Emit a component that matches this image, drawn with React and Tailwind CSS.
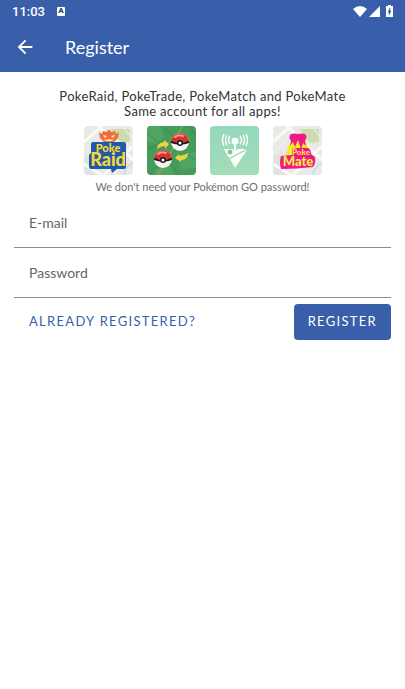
import React from 'react';
import { MdArrowBack } from 'react-icons/md';

const MapBackground = () => (
  <>
    <rect width="49" height="49" fill="#e9e9e5" />
    <path d="M27 3h19v13l-9 1z" fill="#cbddb0" />
    <path d="M0 30l10-4 8 23H0z" fill="#e2e2de" />
    <path d="M0 16L18 0M14 0l35 34M0 38l18 11M49 20L20 49" stroke="#fafaf8" strokeWidth="3" fill="none" />
    <path d="M38 0l11 13M32 49l-8-12M0 27l12-11" stroke="#f6f6f4" strokeWidth="1" fill="none" />
    <path d="M40 49q1-8 9-12" stroke="#c3dbea" strokeWidth="1.5" fill="none" />
  </>
);

const PokeRaidLogo = () => (
  <svg viewBox="0 0 49 49" className="size-[49px] rounded" role="img" aria-label="PokeRaid">
    <MapBackground />
    <path d="M15 6l3 2 1-3 4 1 1-2h2l1 2 4-1 1 3 3-2-1 6-4 4H20l-4-4z" fill="#ee7038" />
    <path d="M19 9l4 1-2 2zM31 9l-4 1 2 2zM20 13l3 1 2-1 3 1 2-1-2 2h-6z" fill="#fff3df" />
    <path d="M9 16h31q2 0 2 2v23q0 2-2 2h-7l-5 4-1-4H7q-2 0-2-2V29l2-2v-9q0-2 2-2z" fill="#2159aa" />
    <text textAnchor="middle" fill="#f9d835" className="font-['Lato',sans-serif] font-black">
      <tspan x="24" y="26" className="text-[11px]">Poke</tspan>
      <tspan x="24" y="40" className="text-[18px]">Raid</tspan>
    </text>
  </svg>
);

const Pokeball = ({ x, y }) => (
  <g transform={`translate(${x} ${y})`}>
    <circle r="9" fill="#f4f4f2" />
    <path d="M-9 0a9 9 0 0 1 18 0z" fill="#d8322f" />
    <path d="M-5-5q3-3 8-1" stroke="#f0968c" strokeWidth="2" fill="none" strokeLinecap="round" />
    <path d="M-9-1Q0 2 9-1v2Q0 4-9 1z" fill="#171717" />
    <circle cy="1" r="3" fill="#171717" />
    <circle cy="1" r="1.5" fill="#fff" />
  </g>
);

const PokeTradeLogo = () => (
  <svg viewBox="0 0 49 49" className="size-[49px] rounded" role="img" aria-label="PokeTrade">
    <rect width="49" height="49" fill="#459c5a" />
    <path d="M0 0h13l4 10-8 8-9-3zM30 29l19-3v15l-14 3zM8 43l15-4 4 10H7z" fill="#51a563" />
    <path d="M0 23l10-4M18 2l9 9M0 7l15 13M38 27l11 7M20 35l12 14M42 0l7 10M3 49l7-8" stroke="#3a8c50" strokeWidth="1" fill="none" />
    <path d="M11 49q7-11 12-21T35 0" stroke="#87a548" strokeWidth="1.5" fill="none" />
    <path d="M10 23q0-6 7-7v-2l5 4-4 5v-3q-4 0-8 3z" fill="#f0d23c" />
    <path d="M41 27q0 7-7 7v2l-6-4 4-4v2q5 0 9-3z" fill="#f0d23c" />
    <Pokeball x={33} y={16} />
    <Pokeball x={16} y={33} />
  </svg>
);

const PokeMatchLogo = () => (
  <svg viewBox="0 0 49 49" className="size-[49px] rounded" role="img" aria-label="PokeMatch">
    <defs>
      <linearGradient id="mint" x1="0" y1="0" x2="0" y2="1">
        <stop offset="0" stopColor="#93d9bb" />
        <stop offset="1" stopColor="#a3dcb8" />
      </linearGradient>
    </defs>
    <rect width="49" height="49" fill="url(#mint)" />
    <circle cx="25" cy="15" r="3.5" fill="#fff" />
    <path d="M25 18v6" stroke="#fff" strokeWidth="2" />
    <path d="M20 10q-3 4 0 8M17 9q-3 5 0 10M14 8q-3 6 0 12M30 10q3 4 0 8M33 9q3 5 0 10M36 8q3 6 0 12" stroke="#fff" strokeWidth="1.4" fill="none" />
    <path d="M14 23h8l3 2 3-2h8L19 32z" fill="#fff" />
    <circle cx="20" cy="26" r="2.5" fill="#7cc9a2" />
    <path d="M37 24L25 42l-5-9z" fill="#fff" />
  </svg>
);

const PokeMateLogo = () => (
  <svg viewBox="0 0 49 49" className="size-[49px] rounded" role="img" aria-label="PokeMate">
    <MapBackground />
    <path d="M19 14h13l3 7 2 8H13l2-8z" fill="#f8ea2c" />
    <path d="M18 15q-3-4 0-7 3-1 7 0 5-1 7 0 3 3 0 7l1 5-3-3-2 6-3-9-3 7-2-5-3 4z" fill="#ee1a88" />
    <path d="M19 23q8-2 16-1 3 1 3 6l4 3q1 6-2 10-16 2-32 2-2-7 0-13l11-1z" fill="#ee1a88" />
    <path d="M13 29l2-7h4l-1 7z" fill="#f8ea2c" />
    <text textAnchor="middle" fill="#f8ed42" className="font-['Lato',sans-serif] font-black">
      <tspan x="28" y="29" className="text-[8px]">Poke</tspan>
      <tspan x="25" y="40" className="text-[13px]">Mate</tspan>
    </text>
  </svg>
);

const StatusBar = () => (
  <div className="flex h-[22px] items-center justify-between px-3">
    <div className="flex items-center gap-3 font-['Roboto',sans-serif] text-[13px] font-medium leading-none">
      <span>11:03</span>
      <span className="flex h-[9px] w-2 items-center justify-center rounded-[1px] bg-white text-[8px] font-black text-[#2c3f6b]">A</span>
    </div>
    <div className="flex items-center gap-0.5" aria-hidden="true">
      <svg viewBox="0 0 14 11" className="h-[11px] w-3.5" fill="currentColor">
        <path d="M0 3q7-6 14 0L7 11z" />
      </svg>
      <svg viewBox="0 0 11 11" className="size-[11px]" fill="currentColor">
        <path d="M11 0v11H0z" />
      </svg>
      <svg viewBox="0 0 7 12" className="ml-1 h-3 w-[7px]">
        <path d="M2 0h3v1h2v11H0V1h2z" fill="#fff" />
        <path d="M4 3L2 7h1v3l2-4H4z" fill="#395faa" stroke="#395faa" strokeWidth="0.5" />
      </svg>
    </div>
  </div>
);

// Label rests over the input until it is focused or filled
const Field = ({ id, label, type }) => (
  <div className="relative border-b border-[#8b8b8b]">
    <input
      id={id}
      type={type}
      placeholder=" "
      className="peer block h-[49px] w-full px-[15px] pt-2 text-sm text-[#222] outline-none"
    />
    <label
      htmlFor={id}
      className="pointer-events-none absolute left-[15px] top-0 text-[10px] leading-[49px] text-[#666] peer-not-placeholder-shown:leading-4 peer-placeholder-shown:text-sm peer-placeholder-shown:leading-[49px] peer-focus:text-[10px] peer-focus:leading-4"
    >
      {label}
    </label>
  </div>
);

export default function App() {
  return (
    <div className="min-h-screen bg-white font-['Lato',sans-serif] text-[#333]">
      <header className="bg-[#395faa] text-white">
        <StatusBar />
        <div className="flex h-[50px] items-center gap-[29px] px-3.5">
          <button type="button" aria-label="Back">
            <MdArrowBack className="size-[22px]" />
          </button>
          <h1 className="text-lg">Register</h1>
        </div>
      </header>

      <main className="px-3.5 pt-[17px]">
        {/* Intro */}
        <section className="flex flex-col items-center text-center">
          <p className="text-[13px] leading-[15px] tracking-wide">
            PokeRaid, PokeTrade, PokeMatch and PokeMate
            <br />
            Same account for all apps!
          </p>
          <div className="mt-[7px] flex gap-3.5">
            <PokeRaidLogo />
            <PokeTradeLogo />
            <PokeMatchLogo />
            <PokeMateLogo />
          </div>
          <p className="mt-1 text-[11px] leading-4 text-[#707070]">We don't need your Pokémon GO password!</p>
        </section>

        {/* Form */}
        <form className="mt-[3px]" onSubmit={(e) => e.preventDefault()}>
          <Field id="email" label="E-mail" type="email" />
          <Field id="password" label="Password" type="password" />
          <div className="mt-1.5 flex items-start justify-between">
            <a href="#login" className="py-2 pl-[15px] text-[13px] leading-[18px] tracking-widest text-[#395faa]">
              ALREADY REGISTERED?
            </a>
            <button type="submit" className="h-9 rounded bg-[#395faa] px-3.5 text-[13px] tracking-widest text-white">
              REGISTER
            </button>
          </div>
        </form>
      </main>
    </div>
  );
}
